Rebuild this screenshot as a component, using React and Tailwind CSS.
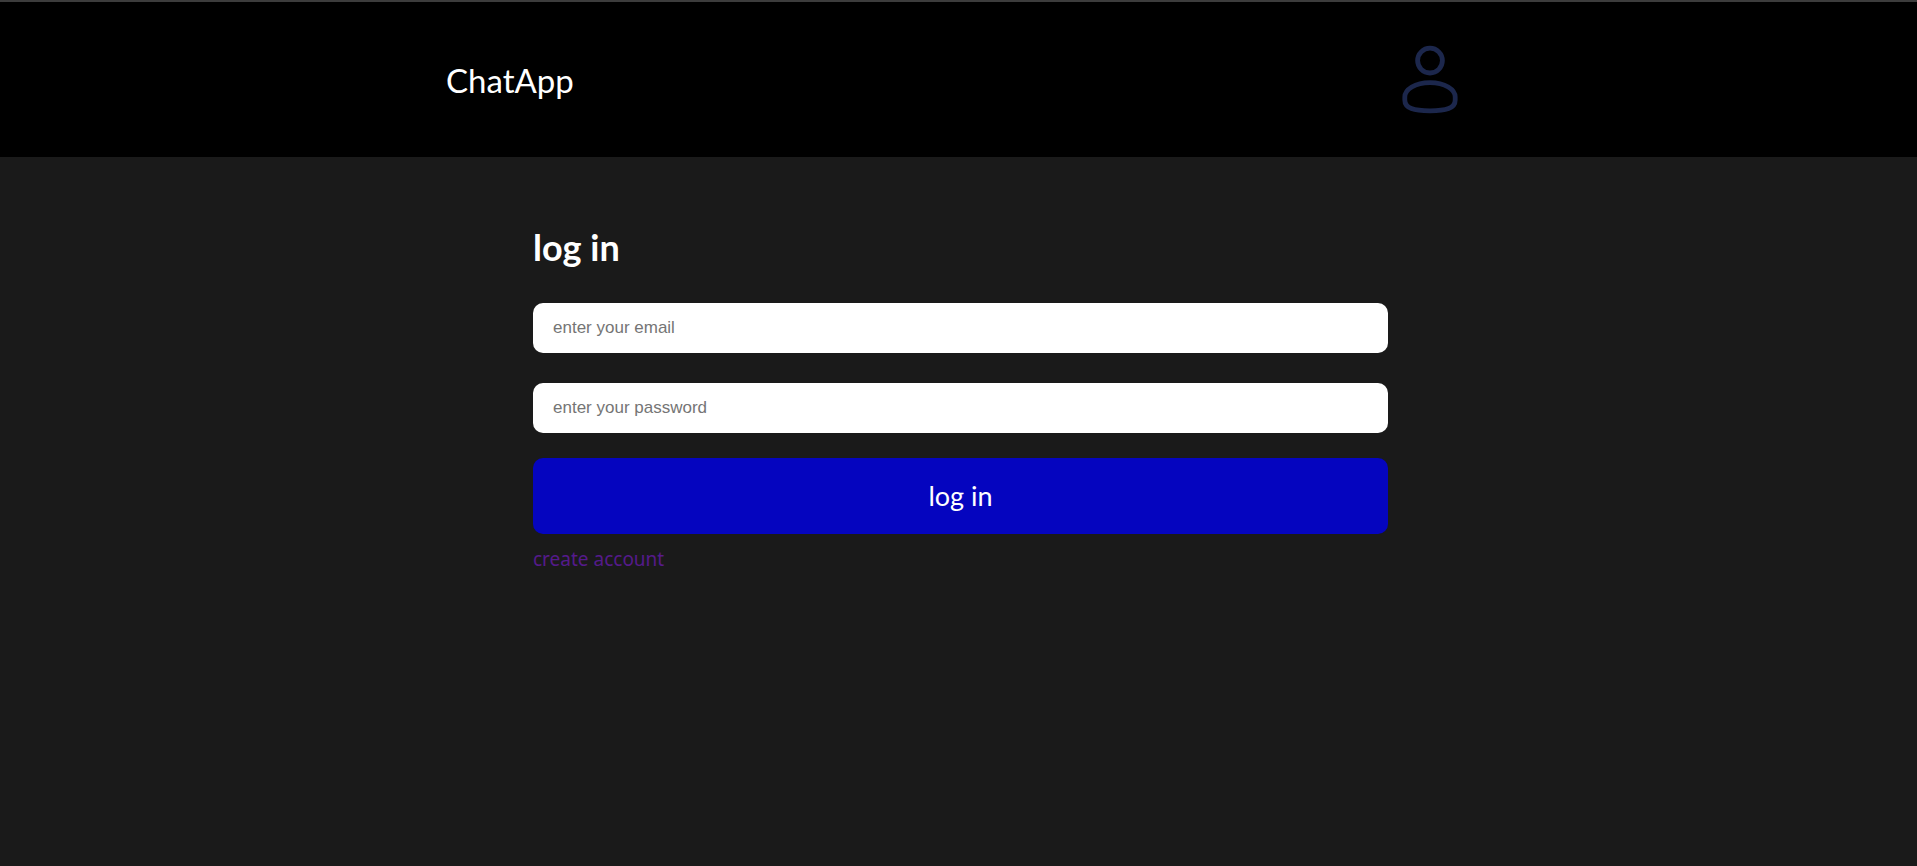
function UserIcon() {
  return (
    <svg
      viewBox="0 0 82 82"
      className="size-[82px]"
      fill="none"
      stroke="#1c274c"
      strokeWidth="4.8"
      aria-hidden="true"
    >
      <circle cx="41" cy="21.6" r="12.4" />
      <path d="M41 43.6 C56 43.6 66.2 50.5 66.2 58 V61 C66.2 69.5 57 71.8 41 71.8 C25 71.8 15.8 69.5 15.8 61 V58 C15.8 50.5 26 43.6 41 43.6 Z" />
    </svg>
  );
}

function Header() {
  return (
    <header className="border-t-2 border-[#3c3c3c] bg-black">
      <div className="mx-auto flex h-[155px] max-w-[1025px] items-center justify-between">
        <a href="#home" className="text-[33px] leading-10 text-white">
          ChatApp
        </a>
        <a href="#profile" aria-label="Profile">
          <UserIcon />
        </a>
      </div>
    </header>
  );
}

function Field({ id, type, label }) {
  return (
    <input
      id={id}
      type={type}
      aria-label={label}
      placeholder={label}
      className="h-[50px] w-full rounded-[10px] bg-white px-5 font-['Liberation_Sans',Arial,sans-serif] text-[17px] text-black placeholder:text-[#757575]"
    />
  );
}

export default function App() {
  return (
    <div className="min-h-screen bg-[#1a1a1a] font-[Lato,sans-serif]">
      <Header />
      <main className="mx-auto max-w-[859px] pt-[70px] pl-1">
        <h1 className="text-[36px] leading-10 font-bold text-white">log in</h1>
        <form className="mt-9" onSubmit={(e) => e.preventDefault()}>
          <div className="flex flex-col gap-[30px]">
            <Field id="email" type="email" label="enter your email" />
            <Field id="password" type="password" label="enter your password" />
          </div>
          <button
            type="submit"
            className="mt-[25px] h-[76px] w-full rounded-[10px] bg-[#0505bf] text-[27px] text-white"
          >
            log in
          </button>
        </form>
        <a
          href="#register"
          className="mt-[11px] inline-block font-['Noto_Sans',sans-serif] text-[19px] leading-7 text-[#551a8b]"
        >
          create account
        </a>
      </main>
    </div>
  );
}
